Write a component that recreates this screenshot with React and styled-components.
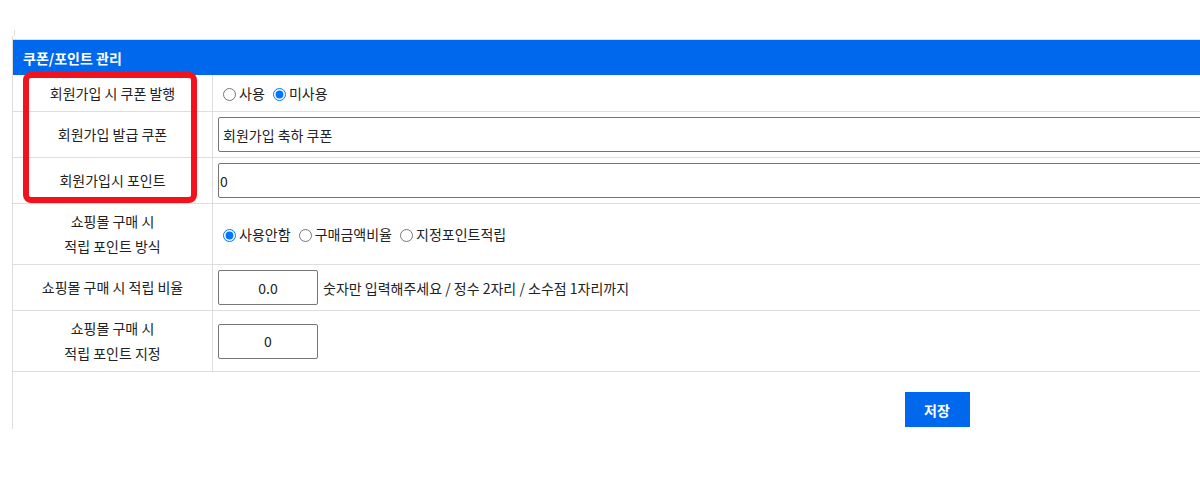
import React, { useState } from 'react'
import styled, { createGlobalStyle } from 'styled-components';

const GlobalStyle = createGlobalStyle`
  body {
    margin: 0;
    background: #fff;
    overflow: hidden;
    font-family: "Noto Sans CJK KR", "Noto Sans", "Liberation Sans", sans-serif;
    font-size: 14px;
    color: #222;
  }
`;

const Page = styled.div`
  padding-top: 30px;
`;

const Tick = styled.div`
  width: 1px;
  height: 6px;
  margin-left: 14px;
  background: #ddd;
`;

const Wrapper = styled.div`
  position: relative;
  width: 1848px;
  margin-left: 12px;
  padding-top: 3px;
  border-left: 1px solid #ddd;
`;

const Table = styled.div`
  border-top: 1px solid #ddd;
`;

const Title = styled.div`
  height: 35px;
  display: flex;
  align-items: center;
  padding: 0 10px;
  background: #0068ed;
  color: #fff;
  font-weight: bold;
`;

const Row = styled.div`
  display: grid;
  grid-template-columns: 200px 1fr;
  border-bottom: 1px solid #ddd;
`;

const Label = styled.div`
  display: flex;
  align-items: center;
  justify-content: center;
  text-align: center;
  padding: 5px;
  line-height: 25px;
  border-right: 1px solid #ddd;
`;

const Cell = styled.div`
  display: flex;
  align-items: center;
  padding: 5px;
  min-height: ${p => p.$min || 25}px;
`;

const Radios = styled.div`
  line-height: 25px;
  white-space: pre;
`;

const Radio = styled.label`
  cursor: pointer;
  input {
    vertical-align: -2px;
  }
`;

const TextInput = styled.input`
  box-sizing: border-box;
  height: 35px;
  width: ${p => (p.$small ? '100px' : '100%')};
  border: 1px solid #767676;
  border-radius: 2px;
  padding: 0 ${p => p.$pad || 4}px;
  font-family: inherit;
  font-size: 14px;
  color: #222;
  text-align: ${p => (p.$small ? 'center' : 'left')};
  outline: none;
`;

const Hint = styled.span`
  margin-left: 5px;
`;

const Footer = styled.div`
  display: flex;
  justify-content: center;
  padding: 20px 0 2px;
`;

const SaveButton = styled.button`
  width: 65px;
  height: 35px;
  border: none;
  background: #0068ed;
  color: #fff;
  font-family: inherit;
  font-size: 14px;
  font-weight: bold;
  cursor: pointer;
`;

const Highlight = styled.div`
  position: absolute;
  left: 10px;
  top: 36px;
  width: 174px;
  height: 131px;
  box-sizing: border-box;
  border: 6px solid #f2121b;
  border-radius: 8px;
  pointer-events: none;
`;

const App = () => {
  const [coupon, setCoupon] = useState('no');
  const [method, setMethod] = useState('none');

  return (
    <>
      <GlobalStyle />
      <Page>
        <Tick />
        <Wrapper>
          <Table>
            <Title>쿠폰/포인트 관리</Title>
            <Row>
              <Label>회원가입 시 쿠폰 발행</Label>
              <Cell $min={26}>
                <Radios>
                  <Radio><input type="radio" name="coupon" checked={coupon === 'yes'} onChange={() => setCoupon('yes')} />사용</Radio>{' '}
                  <Radio><input type="radio" name="coupon" checked={coupon === 'no'} onChange={() => setCoupon('no')} />미사용</Radio>
                </Radios>
              </Cell>
            </Row>
            <Row>
              <Label>회원가입 발급 쿠폰</Label>
              <Cell>
                <TextInput defaultValue="회원가입 축하 쿠폰" />
              </Cell>
            </Row>
            <Row>
              <Label>회원가입시 포인트</Label>
              <Cell>
                <TextInput defaultValue="0" $pad={1} />
              </Cell>
            </Row>
            <Row>
              <Label>쇼핑몰 구매 시<br />적립 포인트 방식</Label>
              <Cell>
                <Radios>
                  <Radio><input type="radio" name="method" checked={method === 'none'} onChange={() => setMethod('none')} />사용안함</Radio>{' '}
                  <Radio><input type="radio" name="method" checked={method === 'rate'} onChange={() => setMethod('rate')} />구매금액비율</Radio>{' '}
                  <Radio><input type="radio" name="method" checked={method === 'fixed'} onChange={() => setMethod('fixed')} />지정포인트적립</Radio>
                </Radios>
              </Cell>
            </Row>
            <Row>
              <Label>쇼핑몰 구매 시 적립 비율</Label>
              <Cell>
                <TextInput $small defaultValue="0.0" />
                <Hint>숫자만 입력해주세요 / 정수 2자리 / 소수점 1자리까지</Hint>
              </Cell>
            </Row>
            <Row>
              <Label>쇼핑몰 구매 시<br />적립 포인트 지정</Label>
              <Cell>
                <TextInput $small defaultValue="0" />
              </Cell>
            </Row>
          </Table>
          <Footer>
            <SaveButton>저장</SaveButton>
          </Footer>
          <Highlight />
        </Wrapper>
      </Page>
    </>
  );
};

export default App;
